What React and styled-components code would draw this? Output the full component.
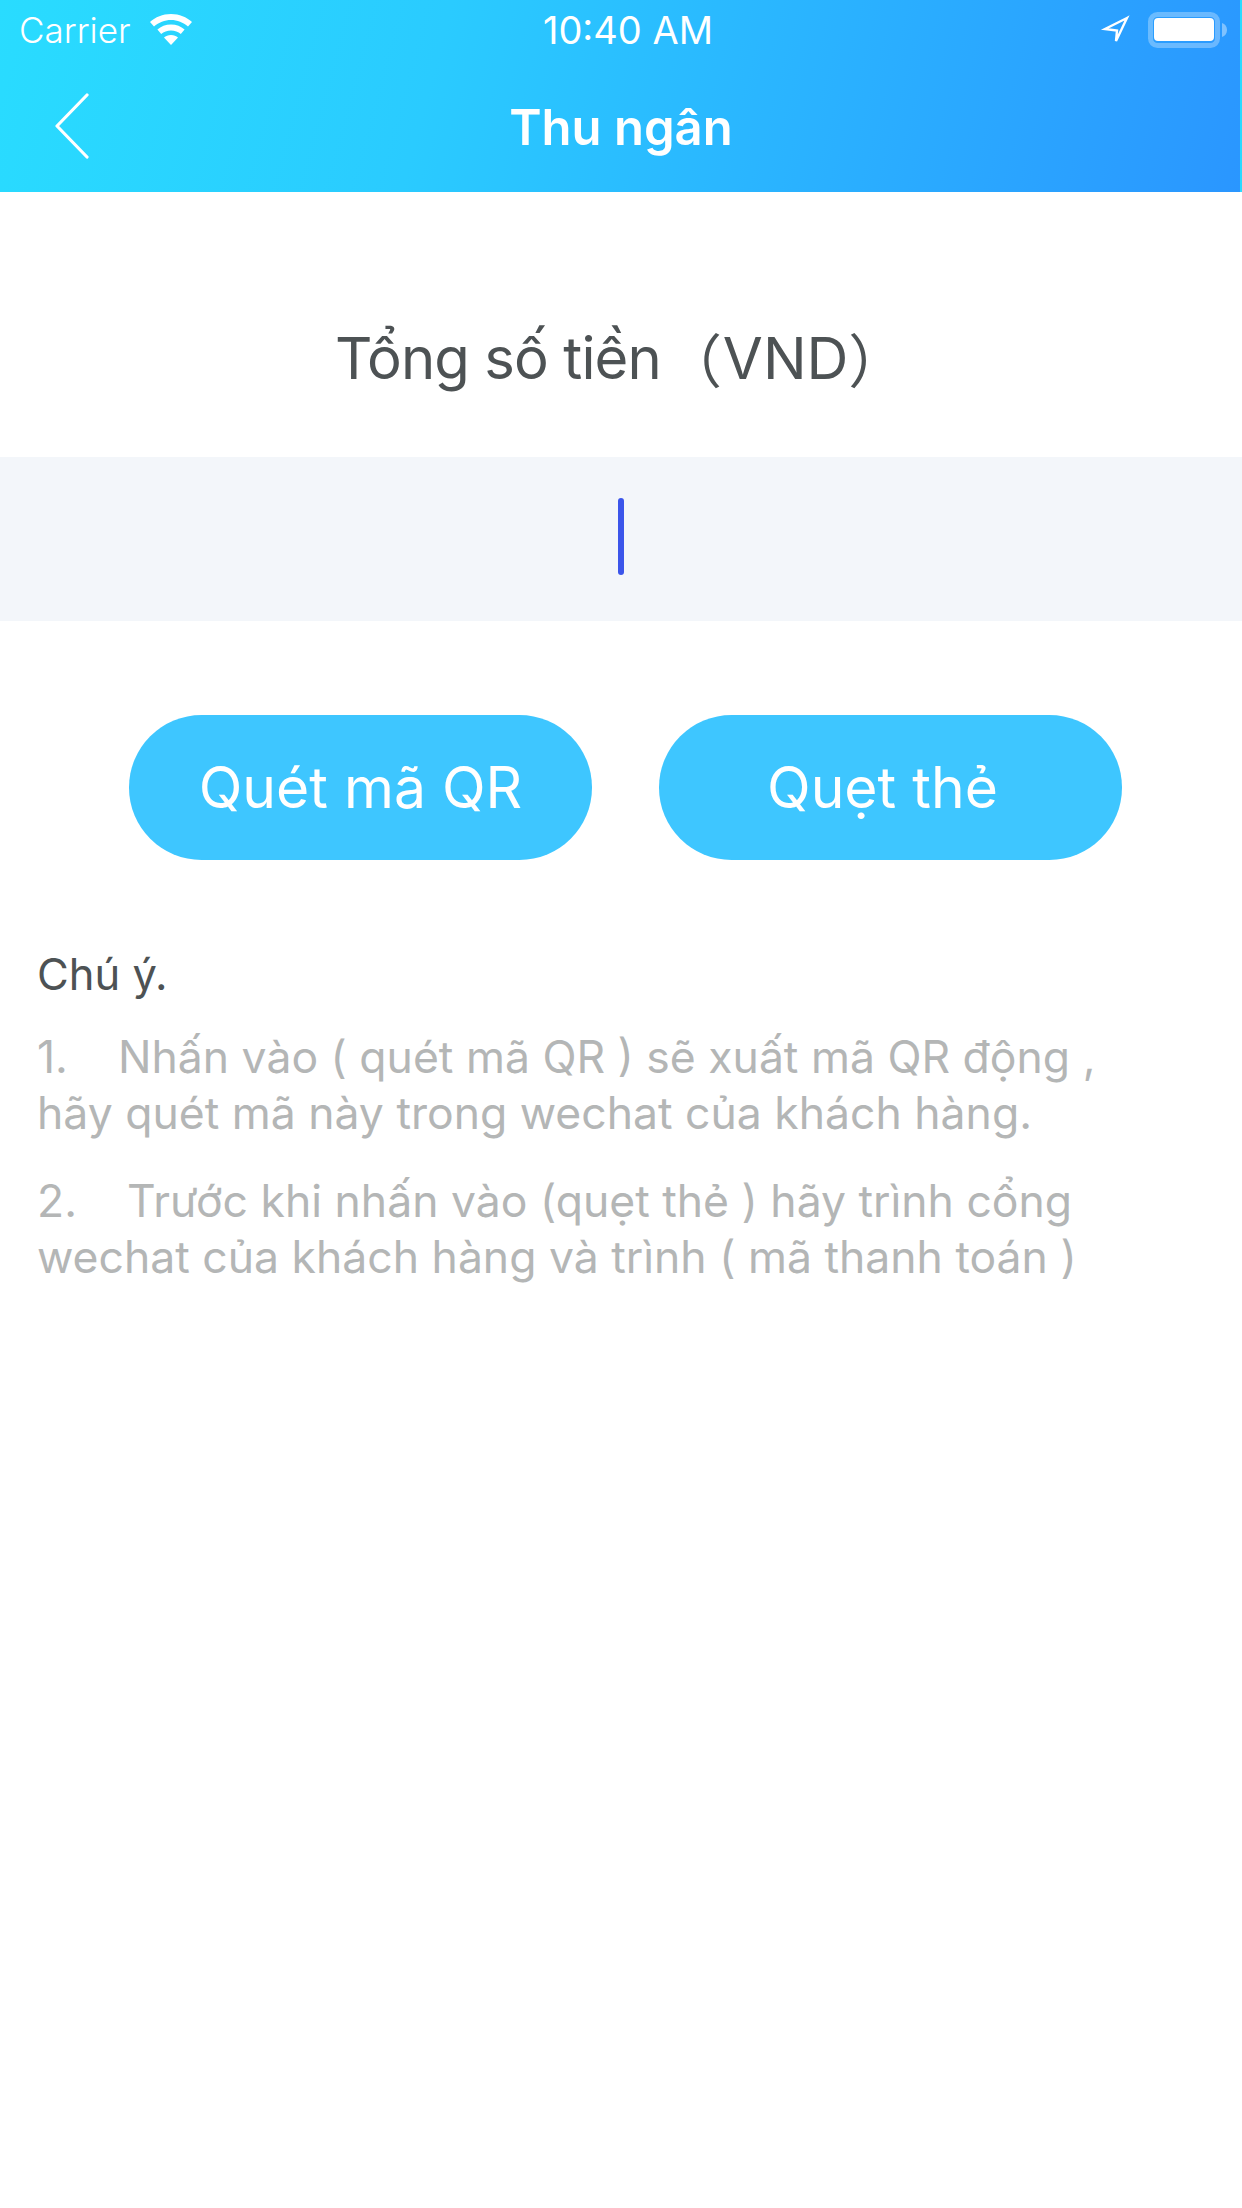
import React from 'react';
import styled, { createGlobalStyle } from 'styled-components';

const GlobalStyle = createGlobalStyle`
  * {
    box-sizing: border-box;
  }
  html, body {
    margin: 0;
    padding: 0;
    background: #fff;
    font-family: Inter, "Noto Sans", "Noto Sans CJK SC", sans-serif;
  }
`;

const Page = styled.div`
  width: 1242px;
  height: 2208px;
  background: #fff;
  overflow: hidden;
`;

const Header = styled.header`
  height: 192px;
  color: #fff;
  background-image: linear-gradient(105deg, #29dcff 0%, #2acbff 35%, #2aa6ff 80%, #2a96ff 100%);
  background-size: 1240px 100%;
`;

const StatusBar = styled.div`
  display: grid;
  grid-template-columns: 1fr auto 1fr;
  align-items: center;
  height: 60px;
  padding: 0 15px 0 19px;
`;

const StatusLeft = styled.div`
  display: flex;
  align-items: center;
  gap: 18px;
  font-size: 35px;
  font-weight: 300;
`;

const StatusTime = styled.div`
  font-size: 38px;
  font-weight: 400;
  margin-left: 10px;
`;

const StatusRight = styled.div`
  display: flex;
  align-items: center;
  justify-content: flex-end;
  gap: 18px;
`;

const NavBar = styled.div`
  display: grid;
  grid-template-columns: 1fr auto 1fr;
  align-items: center;
  height: 132px;
  padding-top: 2px;
`;

const NavTitle = styled.div`
  font-size: 49px;
  font-weight: 600;
`;

const BackButton = styled.div`
  display: flex;
  align-items: center;
  padding-left: 55px;
  margin-top: -2px;
`;

const AmountLabel = styled.div`
  height: 265px;
  display: flex;
  align-items: center;
  padding: 66px 0 0 335px;
  font-size: 58px;
  color: #4d5254;
`;

const AmountText = styled.span`
  letter-spacing: -0.9px;
`;

const Paren = styled.span`
  font-feature-settings: "palt";
  margin: ${({ $open }) => ($open ? '0 3px 0 30px' : '0 0 0 2px')};
`;

const AmountField = styled.div`
  height: 164px;
  background: #f3f6fa;
  display: flex;
  align-items: center;
  padding-left: 618px;
`;

const Caret = styled.div`
  width: 6px;
  height: 77px;
  margin-top: -5px;
  border-radius: 3px;
  background: #3b55ea;
`;

const Actions = styled.div`
  display: flex;
  gap: 67px;
  padding: 94px 0 0 129px;
`;

const ActionButton = styled.div`
  width: 463px;
  height: 145px;
  border-radius: 73px;
  background: #3ec6ff;
  color: #fff;
  font-size: 57px;
  font-weight: 400;
  display: flex;
  align-items: center;
  justify-content: center;
  white-space: pre;
`;

const Notes = styled.div`
  padding: 86px 0 0 37px;
`;

const NotesTitle = styled.div`
  font-size: 43.5px;
  line-height: 56px;
  color: #4d5254;
  font-weight: 400;
`;

const Note = styled.p`
  margin: ${({ $first }) => ($first ? '27px' : '32px')} 0 0;
  font-size: 44.5px;
  line-height: 56px;
  color: #b4b6b6;
  font-weight: 400;
  white-space: pre;
`;

const WifiIcon = () => (
  <svg width="44" height="32" viewBox="0 0 44 32" fill="#fff">
    <path d="M22 0C13.6 0 6.4 3 1 8l4 4.6C9.8 8.4 15.6 6 22 6s12.2 2.4 17 6.6L43 8C37.6 3 30.4 0 22 0z" />
    <path d="M22 10.5c-5.4 0-10 1.9-13.6 5l3.8 4.4c2.6-2.2 6-3.5 9.8-3.5s7.2 1.3 9.8 3.5l3.8-4.4c-3.6-3.1-8.2-5-13.6-5z" />
    <path d="M22 21c-2.9 0-5.2 1-7 2.4L22 31l7-7.6C27.2 22 24.9 21 22 21z" />
  </svg>
);

const LocationIcon = () => (
  <svg width="30" height="30" viewBox="0 0 30 30" fill="none" stroke="#fff" strokeWidth="2.4">
    <path d="M27 3 5 14l12 1.5L16 26z" strokeLinejoin="miter" />
  </svg>
);

const BatteryIcon = () => (
  <svg width="79" height="36" viewBox="0 0 79 36">
    <rect x="2.5" y="2.5" width="67" height="31" rx="7" fill="none" stroke="#fff" strokeOpacity="0.3" strokeWidth="5" />
    <rect x="6" y="6" width="60" height="23" rx="4" fill="#fff" />
    <path d="M74 11c3 1 5 3.500 5 7s-2 6-5 7z" fill="#fff" fillOpacity="0.4" />
  </svg>
);

const BackIcon = () => (
  <svg width="34" height="66" viewBox="0 0 34 66" fill="none" stroke="#fff" strokeWidth="3.2" strokeLinecap="round" strokeLinejoin="round">
    <path d="M32 2 2 33l30 31" />
  </svg>
);

const App = () => (
  <Page>
    <GlobalStyle />
    <Header>
      <StatusBar>
        <StatusLeft>
          Carrier
          <WifiIcon />
        </StatusLeft>
        <StatusTime>10:40 AM</StatusTime>
        <StatusRight>
          <LocationIcon />
          <BatteryIcon />
        </StatusRight>
      </StatusBar>
      <NavBar>
        <BackButton>
          <BackIcon />
        </BackButton>
        <NavTitle>Thu ngân</NavTitle>
      </NavBar>
    </Header>
    <AmountLabel>
      <AmountText>Tổng số tiền</AmountText>
      <Paren $open>（</Paren>
      <span>VND</span>
      <Paren>）</Paren>
    </AmountLabel>
    <AmountField>
      <Caret />
    </AmountField>
    <Actions>
      <ActionButton>Quét mã QR</ActionButton>
      <ActionButton>{'Quẹt thẻ '}</ActionButton>
    </Actions>
    <Notes>
      <NotesTitle>Chú ý.</NotesTitle>
      <Note $first>{'1.    Nhấn vào ( quét mã QR ) sẽ xuất mã QR động ,\nhãy quét mã này trong wechat của khách hàng.'}</Note>
      <Note>{'2.    Trước khi nhấn vào (quẹt thẻ ) hãy trình cổng\nwechat của khách hàng và trình ( mã thanh toán )'}</Note>
    </Notes>
  </Page>
);

export default App;
